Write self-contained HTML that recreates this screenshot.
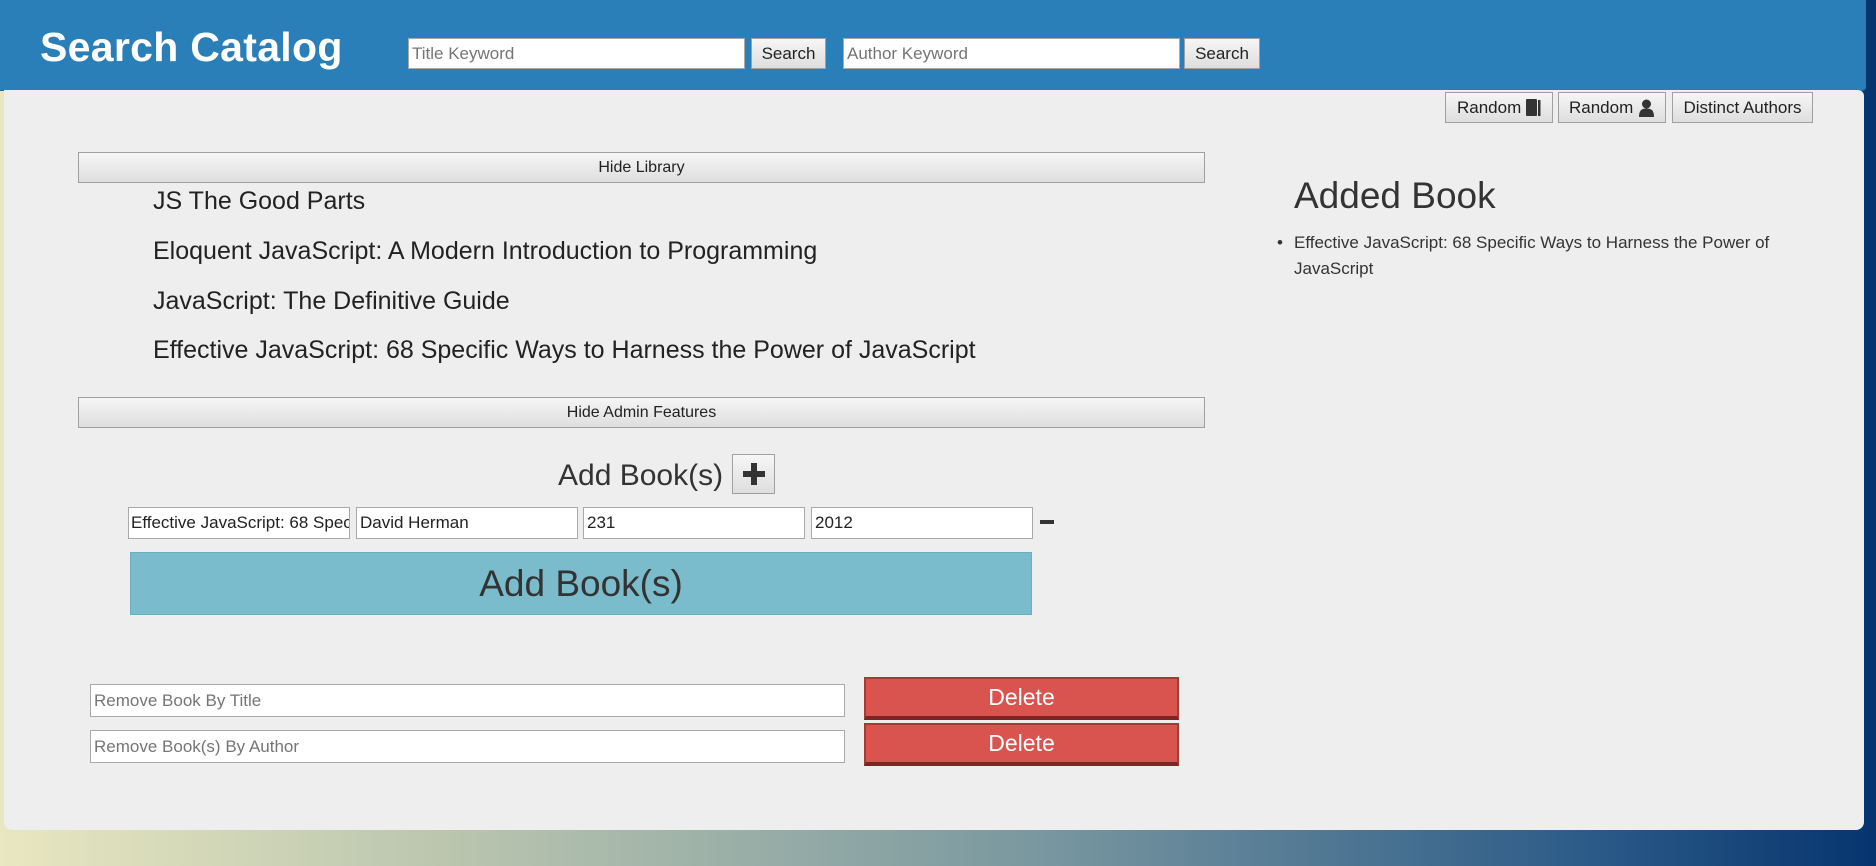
<!DOCTYPE html>
<html><head><meta charset="utf-8"><style>
*{box-sizing:border-box}
body{margin:0;width:1876px;height:866px;overflow:hidden;position:relative;font-family:"Liberation Sans",Arial,sans-serif;color:#333;background:linear-gradient(to right,#e8e7c0 0%,#b8c4ae 25%,#7a98a0 55%,#2b5a88 85%,#06346e 100%)}
.a{position:absolute}
#hdr{left:0;top:0;width:1866px;height:91px;background:#2a7fb8;border-radius:0 0 4px 0;border-bottom:1px solid #1f6a9c}
#panel{left:4px;top:90px;width:1860px;height:740px;background:#eeeeee;border-radius:0 6px 8px 8px}
h1{position:absolute;left:40px;top:24px;margin:0;font-size:41px;font-weight:bold;color:#fff;letter-spacing:0.3px}
.inp{position:absolute;background:#fff;border:1px solid #a9a9a9;font-size:17px;color:#757575;padding:0 3px;display:flex;align-items:center;white-space:nowrap;overflow:hidden}
.inp.v{color:#222}
.btn{position:absolute;border:1px solid #a0a0a0;background:linear-gradient(#f6f6f6,#dedede);font-size:17px;color:#222;display:flex;align-items:center;justify-content:center;white-space:nowrap}
.bar{font-size:16px}
.lib{position:absolute;left:153px;font-size:25px;color:#222}
.del{position:absolute;left:864px;width:315px;height:43px;background:#d9534f;border:2px solid #a33a37;border-bottom:4px solid #7e2523;color:#fff;font-size:23px;display:flex;align-items:center;justify-content:center}
</style></head><body>
<div id="hdr" class="a"></div>
<div id="panel" class="a"></div>
<h1>Search Catalog</h1>
<div class="inp" style="left:408px;top:38px;width:337px;height:31px">Title Keyword</div>
<div class="btn" style="left:751px;top:38px;width:75px;height:31px">Search</div>
<div class="inp" style="left:843px;top:38px;width:337px;height:31px">Author Keyword</div>
<div class="btn" style="left:1184px;top:38px;width:76px;height:31px">Search</div>

<div class="btn" style="left:1445px;top:92px;width:108px;height:31px">Random&nbsp;<svg width="15" height="17" viewBox="0 0 15 17"><rect x="0" y="0" width="11" height="17" rx="1" fill="#333"/><rect x="12" y="1" width="2.5" height="16" fill="#333"/></svg></div>
<div class="btn" style="left:1558px;top:92px;width:108px;height:31px">Random&nbsp;<svg width="17" height="18" viewBox="0 0 17 18"><circle cx="8.5" cy="5" r="4.5" fill="#333"/><path d="M1 18 C1 11 4 9.5 8.5 9.5 C13 9.5 16 11 16 18Z" fill="#333"/></svg></div>
<div class="btn" style="left:1672px;top:92px;width:141px;height:31px">Distinct Authors</div>

<div class="a" style="left:1294px;top:175px;font-size:37px;color:#333">Added Book</div>
<div class="a" style="left:1277px;top:230px;font-size:17px;line-height:26px;color:#333;width:520px">
<span style="position:absolute;left:0;top:0">•</span><div style="margin-left:17px">Effective JavaScript: 68 Specific Ways to Harness the Power of JavaScript</div></div>

<div class="btn bar" style="left:78px;top:152px;width:1127px;height:31px">Hide Library</div>
<div class="lib" style="top:187px">JS The Good Parts</div>
<div class="lib" style="top:237px">Eloquent JavaScript: A Modern Introduction to Programming</div>
<div class="lib" style="top:287px">JavaScript: The Definitive Guide</div>
<div class="lib" style="top:336px">Effective JavaScript: 68 Specific Ways to Harness the Power of JavaScript</div>

<div class="btn bar" style="left:78px;top:397px;width:1127px;height:31px">Hide Admin Features</div>
<div class="a" style="left:558px;top:459px;font-size:30px;color:#333">Add Book(s)</div>
<div class="btn" style="left:732px;top:454px;width:43px;height:40px"><svg width="22" height="22" viewBox="0 0 22 22"><rect x="8" y="0" width="6" height="22" fill="#333"/><rect x="0" y="8" width="22" height="6" fill="#333"/></svg></div>
<div class="inp v" style="left:128px;top:507px;width:222px;height:32px;padding:0 2px">Effective JavaScript: 68 Specific Ways</div>
<div class="inp v" style="left:356px;top:507px;width:222px;height:32px">David Herman</div>
<div class="inp v" style="left:583px;top:507px;width:222px;height:32px">231</div>
<div class="inp v" style="left:811px;top:507px;width:222px;height:32px">2012</div>
<div class="a" style="left:1040px;top:520px;width:14px;height:4px;background:#333"></div>
<div class="a" style="left:130px;top:552px;width:902px;height:63px;background:#7bbccc;border:1px solid #6aaebf;font-size:37px;color:#333;display:flex;align-items:center;justify-content:center">Add Book(s)</div>

<div class="inp" style="left:90px;top:684px;width:755px;height:33px">Remove Book By Title</div>
<div class="del" style="top:677px">Delete</div>
<div class="inp" style="left:90px;top:730px;width:755px;height:33px">Remove Book(s) By Author</div>
<div class="del" style="top:723px">Delete</div>
</body></html>
